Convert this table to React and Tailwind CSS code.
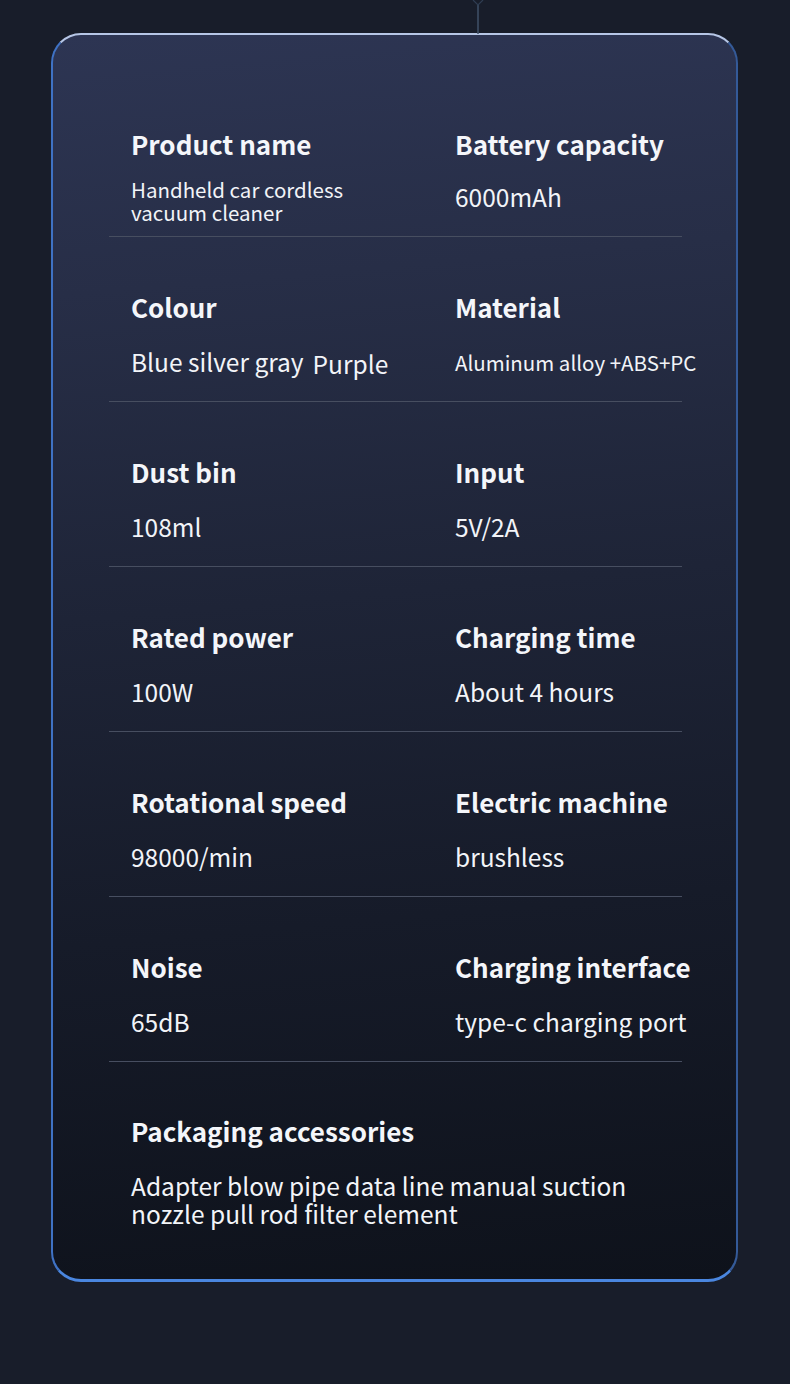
import React from "react";

const rows = [
  [
    { label: "Colour", value: <>Blue silver gray<span className="inline-block ml-[9px] translate-y-[2px]">Purple</span></> },
    { label: "Material", value: "Aluminum alloy +ABS+PC", small: true },
  ],
  [
    { label: "Dust bin", value: "108ml" },
    { label: "Input", value: "5V/2A" },
  ],
  [
    { label: "Rated power", value: "100W" },
    { label: "Charging time", value: "About 4 hours" },
  ],
  [
    { label: "Rotational speed", value: "98000/min" },
    { label: "Electric machine", value: "brushless" },
  ],
  [
    { label: "Noise", value: "65dB" },
    { label: "Charging interface", value: "type-c charging port" },
  ],
];

const font = { fontFamily: '"Noto Sans CJK SC", "Noto Sans", sans-serif' };

function Label({ children }) {
  return <div className="text-[26px] leading-[32px] font-bold text-[#f4f6fa] whitespace-nowrap">{children}</div>;
}

function Divider() {
  return <div className="ml-[56px] w-[573px] h-px bg-[#474e60]" />;
}

export default function App() {
  return (
    <div className="relative w-[790px] h-[1384px] bg-[#181d2a] overflow-hidden" style={font}>
      <svg className="absolute left-[468px] top-0" width="20" height="34" viewBox="0 0 20 34">
        <path d="M10 5 L10 34" stroke="#3f5169" strokeWidth="1.5" />
        <path d="M5 0 L10 5 L15 0" stroke="#2f3d52" strokeWidth="1.2" fill="none" />
      </svg>
      <div className="pt-[33px] pl-[51px]">
        <div className="w-[687px] h-[1249px] rounded-[30px] border-2 border-t-[#b6c6e6] border-l-[#3f72c4] border-r-[#345a98] border-b-[3px] border-b-[#4a86df] bg-[linear-gradient(175deg,#2d3553_0%,#272e47_20%,#1e2437_45%,#161b29_70%,#0e121b_100%)] text-[#f2f4f8]">
          <div className="h-[201px] pt-[93px] pl-[78px] grid grid-cols-[324px_1fr]">
            <div>
              <Label>Product name</Label>
              <div className="mt-[18px] text-[20.5px] leading-[23px] whitespace-nowrap">Handheld car cordless<br />vacuum cleaner</div>
            </div>
            <div>
              <Label>Battery capacity</Label>
              <div className="mt-[23px] text-[24.5px] leading-[28px]">6000mAh</div>
            </div>
          </div>
          <Divider />
          {rows.map((row, i) => (
            <React.Fragment key={i}>
              <div className="h-[164px] pt-[54px] pl-[78px] grid grid-cols-[324px_1fr]">
                {row.map((c, j) => (
                  <div key={j}>
                    <Label>{c.label}</Label>
                    <div className={"mt-[25px] leading-[28px] whitespace-nowrap " + (c.small ? "text-[20.5px]" : "text-[24.5px]")}>{c.value}</div>
                  </div>
                ))}
              </div>
              <Divider />
            </React.Fragment>
          ))}
          <div className="pt-[53px] pl-[78px]">
            <Label>Packaging accessories</Label>
            <div className="mt-[25px] text-[24.5px] leading-[28px] whitespace-nowrap">
              Adapter blow pipe data line manual suction<br />nozzle pull rod filter element
            </div>
          </div>
        </div>
      </div>
    </div>
  );
}
